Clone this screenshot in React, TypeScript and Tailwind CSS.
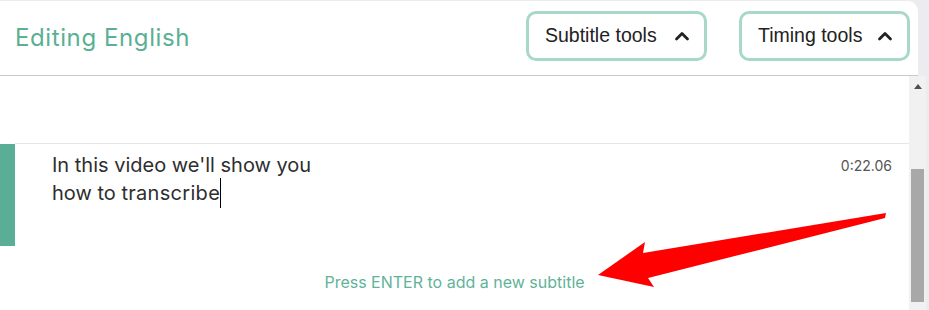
const Chevron = () => (
  <svg width="16" height="10" viewBox="0 0 16 10" fill="none" stroke="#222" strokeWidth="2.8" className="shrink-0">
    <path d="M2.5 8l5.5-5.5 5.5 5.5" strokeLinecap="round" strokeLinejoin="round" />
  </svg>
);

const ToolButton = ({ label, width }: { label: string; width: string }) => (
  <button
    className={`flex h-[50px] items-center justify-between rounded-[10px] border-[3px] border-[#a8d8c8] bg-white pl-[16px] pr-[14px] text-[19.5px] text-[#222] ${width}`}
    style={{ fontFamily: '"Liberation Sans", Arial, sans-serif' }}
  >
    <span>{label}</span>
    <Chevron />
  </button>
);

export default function App() {
  return (
    <div
      className="relative h-[310px] w-[929px] overflow-hidden bg-[#ececf0] pt-px"
      style={{ fontFamily: 'Inter, "Noto Sans", sans-serif' }}
    >
      <header className="flex h-[75px] w-[918px] items-center justify-between rounded-tr-[10px] border-b border-[#cfc7cb] bg-white pl-[15px] pr-[8px]">
        <h1 className="text-[24px] font-normal tracking-[0.6px] text-[#5aaf94]">Editing English</h1>
        <div className="flex items-center gap-[32px] pb-[4px]">
          <ToolButton label="Subtitle tools" width="w-[181px]" />
          <ToolButton label="Timing tools" width="w-[171px]" />
        </div>
      </header>

      <div className="flex h-[234px]">
        <main className="w-[909px] bg-white">
          <div className="h-[67px]" />
          <div className="ml-[15px] border-t border-[#e6e6e6]" />
          <div className="flex h-[102px]">
            <div className="w-[15px] bg-[#5aae95]" />
            <div className="flex flex-1 justify-between pl-[37px] pr-[17px] pt-[7px]">
              <p className="text-[20px] leading-[28px] text-[#2e2e2e]">
                In this video we'll show you
                <br />
                how to <span className="border-r border-black py-[3px] tracking-[0.3px]">transcribe</span>
              </p>
              <span className="pt-[4px] text-[14px] text-[#555]">0:22.06</span>
            </div>
          </div>
          <p className="pt-[26px] text-center text-[16px] leading-[20px] text-[#5fb399]">
            Press ENTER to add a new subtitle
          </p>
        </main>

        <div className="flex w-[17px] flex-col bg-[#f1f1f1]">
          <div className="flex h-[20px] items-center justify-center">
            <div className="h-0 w-0 border-x-[4px] border-b-[5px] border-x-transparent border-b-[#505050]" />
          </div>
          <div className="mx-[2px] mt-[73px] h-[133px] bg-[#a8a8a8]" />
        </div>
      </div>

      <svg className="pointer-events-none absolute left-0 top-0" width="929" height="310" viewBox="0 0 929 310">
        <polygon points="598,275 645,242 643,253 886,213 885,218 648,278 654,287" fill="#ff0000" />
      </svg>
    </div>
  );
}
